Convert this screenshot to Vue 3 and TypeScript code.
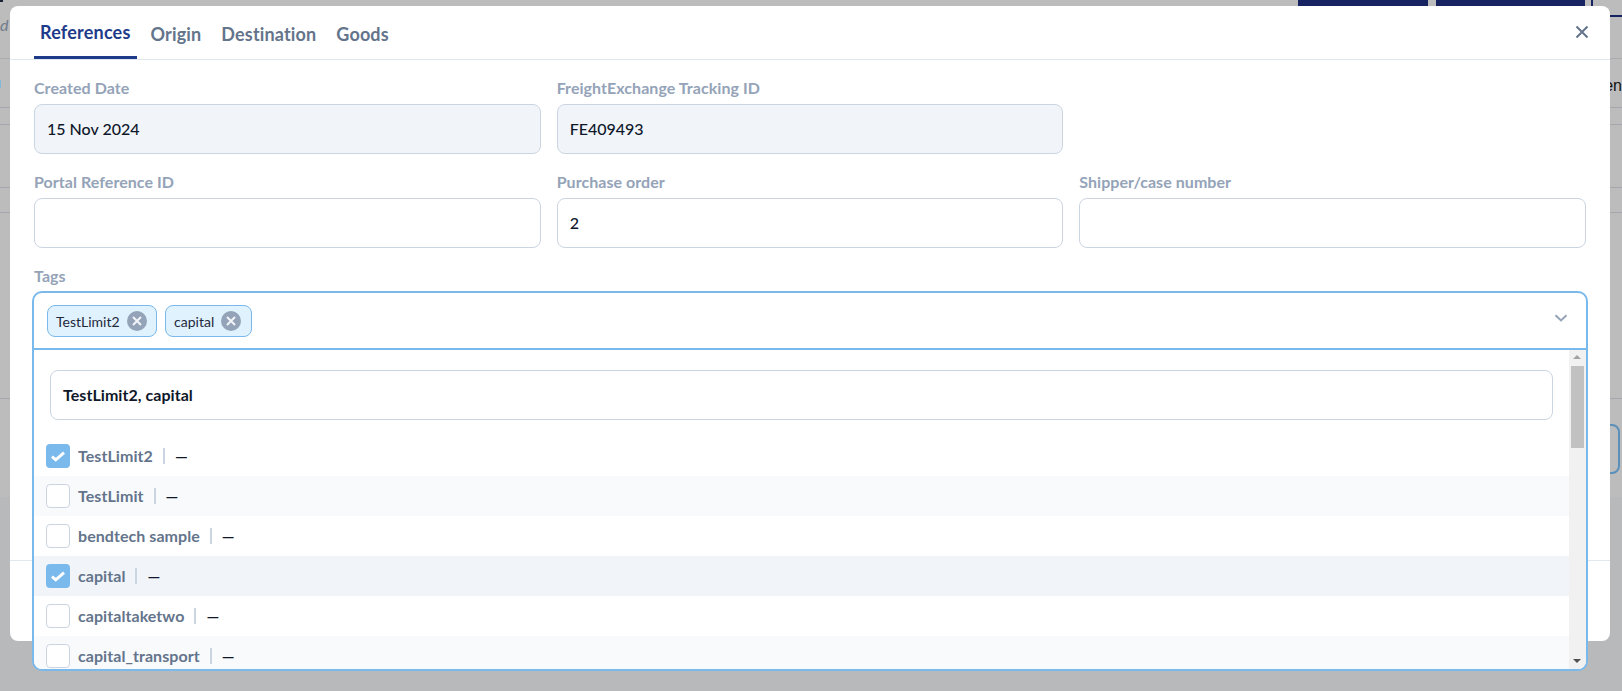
<script setup lang="ts">
const tabs = ['References', 'Origin', 'Destination', 'Goods']

interface Field {
  label: string
  value: string
  locked?: boolean
  empty?: boolean
}

const fields: Field[] = [
  { label: 'Created Date', value: '15 Nov 2024', locked: true },
  { label: 'FreightExchange Tracking ID', value: 'FE409493', locked: true },
  { label: '', value: '', empty: true },
  { label: 'Portal Reference ID', value: '' },
  { label: 'Purchase order', value: '2' },
  { label: 'Shipper/case number', value: '' },
]

const chips = ['TestLimit2', 'capital']

const options = [
  { name: 'TestLimit2', checked: true },
  { name: 'TestLimit', checked: false },
  { name: 'bendtech sample', checked: false },
  { name: 'capital', checked: true, hover: true },
  { name: 'capitaltaketwo', checked: false },
  { name: 'capital_transport', checked: false },
]

const bgRows = [17, 63, 25, 186]
</script>

<template>
  <div class="page">
    <div class="bg" aria-hidden="true">
      <div class="bg-top">
        <span class="bg-icon"></span>
        <span class="bg-btn bg-btn-a"></span>
        <span class="bg-btn bg-btn-b"></span>
        <span class="bg-bar"></span>
      </div>
      <div class="bg-head">
        <em class="bg-d">d</em>
      </div>
      <div class="bg-title">
        <span class="bg-dot"></span>
        <span class="bg-en">en</span>
      </div>
      <div v-for="(h, i) in bgRows" :key="i" class="bg-row" :style="{ height: h + 'px' }"></div>
      <div class="bg-action"><span class="bg-outline"></span></div>
      <div class="bg-rest"></div>
    </div>

    <div class="modal">
      <header class="modal-head">
        <nav class="tabs">
          <div v-for="(tab, i) in tabs" :key="tab" class="tab" :class="{ active: i === 0 }">{{ tab }}</div>
        </nav>
        <svg class="close" viewBox="0 0 14 14" width="14" height="14" aria-label="Close">
          <path d="M1.5 1.5 12.5 12.5M12.5 1.5 1.5 12.5" />
        </svg>
      </header>

      <section class="form">
        <div class="grid">
          <div v-for="(f, i) in fields" :key="i" class="field">
            <template v-if="!f.empty">
              <div class="label">{{ f.label }}</div>
              <div class="input" :class="{ locked: f.locked }">{{ f.value }}</div>
            </template>
          </div>
        </div>

        <div class="label tags-label">Tags</div>
        <div class="tags">
          <div class="control">
            <div class="chips">
              <span v-for="c in chips" :key="c" class="chip">
                {{ c }}
                <svg class="chip-x" viewBox="0 0 20 20" width="20" height="20">
                  <circle cx="10" cy="10" r="10" />
                  <path d="M6 6 14 14M14 6 6 14" />
                </svg>
              </span>
            </div>
            <svg class="chev" viewBox="0 0 14 8" width="14" height="8">
              <path d="M1.5 1.2 7 6.4 12.5 1.2" />
            </svg>
          </div>
          <div class="menu">
            <div class="list">
              <div class="search"><div class="search-box">TestLimit2, capital</div></div>
              <div
                v-for="(o, i) in options"
                :key="o.name"
                class="option"
                :class="{ alt: i % 2 === 1, hover: o.hover }"
              >
                <span class="check" :class="{ on: o.checked }">
                  <svg v-if="o.checked" viewBox="0 0 24 24" width="24" height="24">
                    <path d="M6 12.6 9.8 15.8 18 8.6" />
                  </svg>
                </span>
                <span class="opt-name">{{ o.name }}</span>
                <span class="opt-sep"></span>
                <span class="opt-val">—</span>
              </div>
            </div>
            <div class="scrollbar">
              <span class="arrow up"></span>
              <span class="thumb"></span>
              <span class="arrow down"></span>
            </div>
          </div>
        </div>
      </section>

      <footer class="modal-foot"></footer>
    </div>
  </div>
</template>

<style>
html,
body {
  margin: 0;
  padding: 0;
}
</style>

<style scoped>
.page {
  position: relative;
  width: 1622px;
  height: 691px;
  overflow: hidden;
  background: #b8b9bb;
  font-family: Lato, 'Liberation Sans', sans-serif;
}

.bg {
  display: flex;
  flex-direction: column;
}
.bg-top {
  display: flex;
  justify-content: flex-end;
  height: 6px;
  background: #bcbcbd;
}
.bg-icon {
  width: 3px;
  height: 2px;
  margin-right: auto;
  background: #1c2433;
}
.bg-btn {
  display: block;
  height: 6px;
  background: #172260;
}
.bg-btn-a {
  width: 130px;
  margin-right: 8px;
}
.bg-btn-b {
  width: 149px;
  margin-right: 6px;
}
.bg-bar {
  width: 2px;
  height: 6px;
  margin-right: 29px;
  background: #172260;
}
.bg-head {
  height: 53px;
  box-sizing: border-box;
  border-bottom: 1px solid #a9abae;
  background: linear-gradient(to right, #bcbcbd 1610px, transparent 1610px),
    linear-gradient(#bcbcbd 9px, #172260 9px, #172260 11px, #bcbcbd 11px);
}
.bg-d {
  display: block;
  font-size: 16px;
  line-height: 20px;
  padding-top: 9px;
  color: #6f7a88;
}
.bg-title {
  height: 49px;
  box-sizing: border-box;
  background: #bcbcbd;
  border-bottom: 1px solid #a3a6aa;
  display: flex;
  justify-content: space-between;
  align-items: center;
}
.bg-dot {
  display: block;
  width: 1px;
  height: 8px;
  margin-top: 2px;
  background: #82b8d8;
}
.bg-en {
  font-family: 'Liberation Sans', sans-serif;
  font-size: 16px;
  color: #111;
  padding-top: 6px;
}
.bg-row {
  box-sizing: border-box;
  background: #bcbcbd;
  border-bottom: 1px solid #a3a6aa;
}
.bg-action {
  display: flex;
  justify-content: flex-end;
  align-items: flex-start;
  height: 98px;
  padding-top: 25px;
  box-sizing: border-box;
  background: #bcbcbd;
}
.bg-outline {
  display: block;
  width: 60px;
  height: 50px;
  margin-right: 2px;
  box-sizing: border-box;
  border: 2px solid #5a90ba;
  border-radius: 8px;
}
.bg-rest {
  flex: 1;
}

.modal {
  position: absolute;
  left: 10px;
  top: 6px;
  width: 1600px;
  height: 635px;
  background: #fff;
  border-radius: 8px;
  display: flex;
  flex-direction: column;
}
.modal-head {
  display: flex;
  align-items: center;
  justify-content: space-between;
  height: 54px;
  flex: none;
  box-sizing: border-box;
  padding: 0 21px 0 24px;
  border-bottom: 1px solid #e2e8f0;
}
.tabs {
  display: flex;
  align-self: stretch;
  gap: 8px;
}
.tab {
  padding: 14px 6px 0;
  height: 53px;
  box-sizing: border-box;
  margin-bottom: -1px;
  font-size: 18px;
  line-height: 28px;
  font-weight: 700;
  color: #64748b;
  letter-spacing: 0.15px;
}
.tab.active {
  padding-top: 12px;
  color: #1e3a8a;
  border-bottom: 3px solid #1e3a8a;
  letter-spacing: 0.2px;
}
.close {
  flex: none;
  margin-bottom: 1px;
  fill: none;
  stroke: #64748b;
  stroke-width: 2;
}

.form {
  flex: 1;
  min-height: 0;
  padding: 16px 24px 0;
}
.grid {
  display: grid;
  grid-template-columns: repeat(3, 1fr);
  gap: 16px;
}
.label {
  height: 28px;
  font-size: 16px;
  line-height: 20px;
  padding-top: 2px;
  box-sizing: border-box;
  font-weight: 700;
  color: #94a3b8;
  letter-spacing: 0.05px;
}
.input {
  height: 50px;
  box-sizing: border-box;
  padding: 0 12px 2px;
  border: 1px solid #cbd5e1;
  border-radius: 8px;
  display: flex;
  align-items: center;
  font-size: 16px;
  font-weight: 500;
  color: #0f172a;
}
.input.locked {
  background: #f1f5f9;
}
.tags-label {
  margin-top: 16px;
  height: 27px;
}
.tags {
  position: relative;
  z-index: 2;
  height: 380px;
  margin-left: -2px;
  margin-right: -2px;
  box-sizing: border-box;
  border: 2px solid #7ab9ec;
  border-radius: 10px;
  background: #fff;
  overflow: hidden;
  display: flex;
  flex-direction: column;
}
.control {
  flex: none;
  height: 55px;
  box-sizing: border-box;
  padding: 12px 18px 0 13px;
  display: flex;
  justify-content: space-between;
}
.chips {
  display: flex;
  gap: 8px;
}
.chip {
  display: flex;
  align-items: center;
  gap: 7px;
  height: 32px;
  box-sizing: border-box;
  padding: 0 9.5px 0 8px;
  background: #e0f2fe;
  border: 1px solid #7ab9ec;
  border-radius: 8px;
  font-size: 14px;
  color: #1e293b;
}
.chip-x circle {
  fill: #94a3b8;
}
.chip-x path {
  fill: none;
  stroke: #f1f5f9;
  stroke-width: 2;
}
.chev {
  margin-top: 9px;
  fill: none;
  stroke: #94a3b8;
  stroke-width: 2;
}

.menu {
  flex: 1;
  min-height: 0;
  display: flex;
  border-top: 2px solid #7ab9ec;
}
.list {
  flex: 1;
  min-width: 0;
  overflow: hidden;
}
.search {
  padding: 20px 16px 16px 16px;
}
.search-box {
  height: 50px;
  box-sizing: border-box;
  padding: 0 12px 2px;
  border: 1px solid #cbd5e1;
  border-radius: 8px;
  display: flex;
  align-items: center;
  font-size: 16px;
  font-weight: 700;
  color: #0f172a;
  letter-spacing: 0.05px;
}
.option {
  height: 40px;
  flex: none;
  display: flex;
  align-items: center;
  padding-left: 12px;
  font-size: 16px;
  font-weight: 700;
  color: #64748b;
}
.option.alt {
  background: #f8fafc;
}
.option.hover {
  background: #f1f5f9;
}
.check {
  flex: none;
  width: 24px;
  height: 24px;
  box-sizing: border-box;
  border: 1px solid #cbd5e1;
  border-radius: 4px;
  background: #fff;
  margin-right: 8px;
  display: block;
}
.check.on {
  border: none;
  background: #7ab9ec;
}
.check svg {
  display: block;
  fill: none;
  stroke: #fff;
  stroke-width: 3;
}
.opt-name {
  letter-spacing: 0.06px;
  padding-bottom: 2px;
}
.opt-sep {
  width: 2px;
  height: 16px;
  margin: 0 10px 0 10px;
  background: #cbd5e1;
}
.opt-val {
  color: #0f172a;
  font-weight: 700;
  padding-bottom: 2px;
}

.scrollbar {
  flex: none;
  width: 17px;
  background: #f1f1f1;
  position: relative;
}
.arrow {
  position: absolute;
  left: 4px;
  width: 0;
  height: 0;
  border-left: 4px solid transparent;
  border-right: 4px solid transparent;
}
.arrow.up {
  top: 5px;
  border-bottom: 4px solid #a3a3a3;
}
.arrow.down {
  bottom: 6px;
  border-top: 4px solid #505050;
}
.thumb {
  position: absolute;
  top: 16px;
  left: 2px;
  width: 13px;
  height: 82px;
  background: #c1c1c1;
}

.modal-foot {
  flex: none;
  height: 81px;
  box-sizing: border-box;
  border-top: 1px solid #e2e8f0;
}
</style>
